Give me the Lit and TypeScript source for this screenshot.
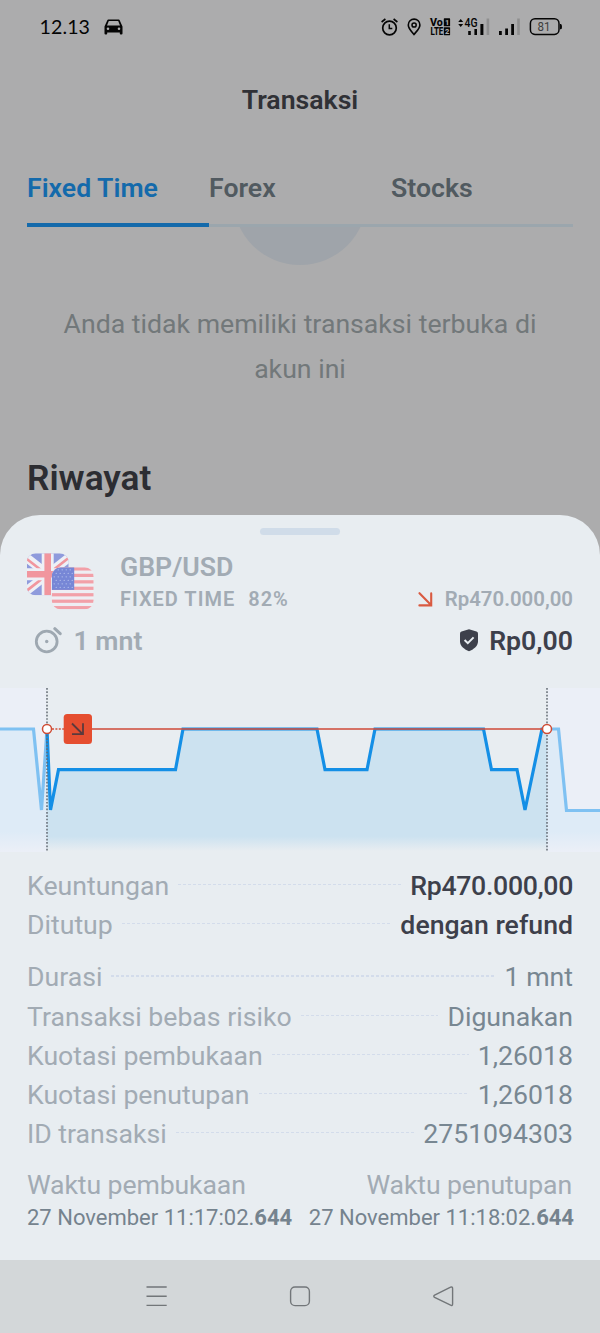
import { LitElement, html, css, svg } from "lit";
import { customElement } from "lit/decorators.js";

const LINE = "M47 729L50.5 810L58.5 769.7H175.5L183 729H317L325 769.7H367L375 729H483.5L491.5 769.7H517L525 810L542 729H547";

@customElement("status-bar")
class StatusBar extends LitElement {
  static styles = css`
    :host { display: flex; height: 54px; color: #050505; padding: 0 38px 0 39.5px; align-items: center; justify-content: space-between; font-family: Lato, sans-serif; }
    .left { display: flex; align-items: center; gap: 14px; }
    .time { font-size: 19.6px; letter-spacing: 0.1px; line-height: 53px; height: 54px; }
    svg { display: block; }
    .label { font-family: Roboto, sans-serif; }
  `;
  render() {
    return html`
      <div class="left">
        <span class="time">12.13</span>
        <svg width="19" height="16" viewBox="0 0 19 16"><path fill="currentColor" fill-rule="evenodd" d="M4.4 0.6H14.6Q15.5 .6 15.8 1.4L18.5 7.6V14.6Q18.5 15.6 17.4 15.6H16.8Q15.8 15.6 15.8 14.6V13.4H3.2V14.6Q3.2 15.6 2.2 15.6H1.6Q.5 15.6 .5 14.6V7.6L3.2 1.4Q3.5.6 4.4.6ZM4.8 2.1L3 6.5H16L14.2 2.1ZM4 8.4A1.3 1.3 0 1 0 4 11A1.3 1.3 0 1 0 4 8.4ZM15 8.4A1.3 1.3 0 1 0 15 11A1.3 1.3 0 1 0 15 8.4Z"/></svg>
      </div>
      <svg width="182" height="24" viewBox="380 15 182 24" fill="none" stroke="#050505">
        <circle cx="389.5" cy="28" r="6.8" stroke-width="1.7"/>
        <path d="M389.3 24.2V28.4H392.3" stroke-width="1.5"/>
        <path d="M381.6 22L385.4 19M397.4 22L393.6 19" stroke-width="1.6"/>
        <path d="M414 34.4C411 30.8 408.3 28.4 408.3 24.9A5.8 5.8 0 0 1 419.9 24.9C419.9 28.4 417 30.8 414 34.4Z" stroke-width="1.6"/>
        <circle cx="414.1" cy="25" r="2.1" stroke-width="1.5"/>
        <g fill="#050505" stroke="none" class="label" font-weight="800">
          <text x="430" y="26.2" font-size="10.8" textLength="12.8" lengthAdjust="spacingAndGlyphs">Vo</text>
          <text x="430.5" y="35.2" font-size="10.8" textLength="12.8" lengthAdjust="spacingAndGlyphs">LTE</text>
          <rect x="443.8" y="18.3" width="6.3" height="8" rx=".6"/><rect x="443.8" y="27.2" width="6.3" height="8" rx=".6"/>
          <g fill="#acacad" font-size="7.5"><text x="445.1" y="25">1</text><text x="444.9" y="33.9">2</text></g>
          <path d="M458.2 22L460.7 19L463.2 22ZM458.2 24L460.7 27L463.2 24Z"/>
          <text x="464.6" y="26.8" font-size="12.2" font-weight="500" textLength="13" lengthAdjust="spacingAndGlyphs">4G</text>
          <rect x="468.2" y="31" width="2.6" height="4"/><rect x="474.4" y="29" width="2.6" height="6"/><rect x="480.4" y="24" width="3" height="11"/>
          <rect x="486.6" y="18.5" width="2.6" height="16.5" fill="#8f8f90"/>
          <rect x="499" y="31" width="2.8" height="4"/><rect x="505.2" y="28.5" width="2.8" height="6.5"/><rect x="511.2" y="24" width="2.8" height="11"/>
          <rect x="517.2" y="18.5" width="2.6" height="16.5" fill="#8f8f90"/>
          <text x="537.4" y="31" font-size="12" font-weight="400" fill="#3c3c3c" textLength="13" lengthAdjust="spacingAndGlyphs">81</text>
          <path d="M560 24H560.8Q562 24 562 26.7T560.8 29.3H560Z"/>
        </g>
        <rect x="530.4" y="18.8" width="28.6" height="15.6" rx="4.6" stroke-width="1.5"/>
      </svg>`;
  }
}

@customElement("trade-chart")
class TradeChart extends LitElement {
  static styles = css`:host { display: block; height: 168px; } svg { display: block; }`;
  render() {
    return html`<svg width="600" height="168" viewBox="0 686 600 168" fill="none">
      <defs>
        <linearGradient id="in" x1="0" y1="729" x2="0" y2="851" gradientUnits="userSpaceOnUse">
          <stop offset="0" stop-color="#cce2f0"/><stop offset=".88" stop-color="#cce2f0"/><stop offset="1" stop-color="#e8edf1"/>
        </linearGradient>
        <linearGradient id="out" x1="0" y1="729" x2="0" y2="851" gradientUnits="userSpaceOnUse">
          <stop offset="0" stop-color="#deebf7"/><stop offset=".84" stop-color="#deebf7"/><stop offset="1" stop-color="#ebeff7"/>
        </linearGradient>
      </defs>
      <path fill="#ebeff7" d="M0 688H46V852H0ZM548 688H600V852H548Z"/>
      <path fill="url(#out)" d="M0 729H33.5L41.5 810L47 729V851H0ZM547 729H558.5L566.5 810.5H600V851H547Z"/>
      <path fill="url(#in)" d="${LINE}V851H47Z"/>
      <g stroke-width="3.2">
        <path stroke="#7fc1f2" d="M0 729H33.5L41.5 810L47 729M547 729H558.5L566.5 810.5H600"/>
        <path stroke="#148fe6" d="${LINE}"/>
      </g>
      <path stroke="#626a73" stroke-width="1.5" stroke-dasharray="1.7 1.65" d="M47 688V851M547 688V851"/>
      <path stroke="#cf4f3f" stroke-opacity=".78" stroke-width="2.1" d="M92 729H547"/>
      <path stroke="#d4503a" stroke-width="1.6" stroke-dasharray="2 1.4" d="M52 729H64"/>
      <g fill="#fff" stroke="#cf4c35" stroke-width="1.5"><circle cx="47" cy="729" r="4.5"/><circle cx="547" cy="729" r="4.5"/></g>
      <rect x="63.7" y="714" width="28.3" height="30" rx="3.5" fill="#e54e30"/>
      <path stroke="#5b3a3d" stroke-width="1.8" d="M72 723.5L82.5 734M83 723.3V734.2H72"/>
    </svg>`;
  }
}

@customElement("app-root")
class AppRoot extends LitElement {
  static styles = css`
    :host { display: flex; flex-direction: column; width: 600px; height: 1333px; overflow: hidden; background: #acacad; font-family: Roboto, sans-serif; font-size: 26.67px; }
    svg { display: block; }
    .page { height: 460.5px; flex: none; }
    .title { height: 92px; line-height: 92px; text-align: center; font-weight: 600; color: #303136; }
    .tabs { display: grid; grid-template-columns: repeat(3, 1fr); margin: 0 27px; height: 81px; box-sizing: border-box; border-bottom: 3.7px solid #9ba6ad; font-weight: 600; color: #515a60; line-height: 84px; }
    .tab { height: 81px; box-sizing: border-box; }
    .tab.on { color: #146aab; border-bottom: 4px solid #146aab; }
    .disc { height: 38px; overflow: hidden; display: flex; justify-content: center; align-items: flex-end; }
    .circle { width: 134px; height: 134px; border-radius: 50%; background: #9fa4aa; flex: none; }
    .empty { padding: 37px 50px 0; text-align: center; line-height: 45px; color: #72787a; }
    .history { margin: 66px 27px 0; line-height: 40px; font-size: 35.3px; font-weight: 600; color: #2c2d32; }
    .sheet { height: 745px; flex: none; background: #e8edf1; border-radius: 40px 40px 0 0; color: #a2abb4; }
    .grip { height: 34.5px; display: flex; justify-content: center; align-items: center; }
    .grip i { width: 80px; height: 7px; border-radius: 4px; background: #d0dce9; }
    .head { display: grid; grid-template-columns: 93px 1fr auto; height: 75px; padding: 0 27px; }
    .flags { padding-top: 4px; }
    .pair { line-height: 37px; font-weight: 600; }
    .kind { line-height: 27px; font-size: 20px; letter-spacing: 1px; font-weight: 600; }
    .kind span { margin-left: 13px; }
    .stake { align-self: start; padding-top: 36px; display: flex; align-items: center; gap: 12px; font-size: 20.4px; font-weight: 600; line-height: 28px; }
    .result { display: flex; justify-content: space-between; height: 34px; padding: 0 27px 0 34px; font-weight: 600; line-height: 34px; }
    .result div { display: flex; align-items: center; gap: 10.5px; }
    .dark { color: #3d404b; }
    .chart { padding-top: 28px; }
    .rows { padding: 12.9px 27px 0; }
    .row { display: flex; align-items: center; height: 39.2px; line-height: 39.2px; }
    .row.gap { margin-top: 13.2px; }
    .dots { flex: 1; height: 1.4px; margin: 0 9px; position: relative; top: -2px; background: repeating-linear-gradient(90deg, #d3dceb 0 3px, transparent 3px 5px); }
    .value { color: #788792; }
    .value.dark { color: #3d404b; font-weight: 500; }
    .value.tight { letter-spacing: -0.3px; }
    .times { display: flex; justify-content: space-between; padding: 10.6px 26px 0 27px; }
    .times div:last-child { text-align: right; }
    .times div:last-child p:first-child { padding-right: 2px; }
    .times p { margin: 0; line-height: 40px; letter-spacing: -0.12px; }
    .times .stamp { font-size: 22px; line-height: 26px; color: #75838e; letter-spacing: 0; }
    .nav { flex: 1; background: #d3d7d9; }
  `;
  row(label: string, value: string, cls = "", v = "") {
    return html`<div class="row ${cls}"><span class="l">${label}</span><i class="dots"></i><span class="value ${v}">${value}</span></div>`;
  }
  render() {
    const stripes = [0, 1, 2, 3, 4, 5, 6].map((i) => svg`<rect x="25" y=${14 + i * 6.46} width="42" height="3.23" fill="#f2a0a8"/>`);
    const stars = [0, 1, 2, 3, 4, 5].flatMap((r) => [0, 1, 2, 3, 4].map((c) => svg`<circle cx=${27.5 + c * 4 + (r % 2) * 2} cy=${16.5 + r * 3.5} r=".65" fill="#b9c5ee"/>`));
    return html`
      <status-bar></status-bar>
      <div class="page">
        <div class="title">Transaksi</div>
        <div class="tabs"><div class="tab on">Fixed Time</div><div class="tab">Forex</div><div class="tab">Stocks</div></div>
        <div class="disc"><div class="circle"></div></div>
        <div class="empty">Anda tidak memiliki transaksi terbuka di akun ini</div>
        <div class="history">Riwayat</div>
      </div>
      <div class="sheet">
        <div class="grip"><i></i></div>
        <div class="head">
          <div class="flags"><svg width="67" height="57" viewBox="0.3 -0.3 67 57">
            <defs><clipPath id="a"><rect width="42" height="42" rx="9"/></clipPath><clipPath id="b"><rect x="25" y="14" width="42" height="42" rx="9"/></clipPath></defs>
            <g clip-path="url(#a)">
              <rect width="42" height="42" fill="#8f9bdc"/>
              <path d="M-2 3L44 39M44 3L-2 39" stroke="#eef0f6" stroke-width="9"/>
              <path d="M-2 4L44 40M44 3L-2 39" stroke="#f1969e" stroke-width="2.6"/>
              <path d="M21 0V42M0 21H42" stroke="#eef0f6" stroke-width="12"/>
              <path d="M21 0V42M0 21H42" stroke="#f1969e" stroke-width="6.6"/>
            </g>
            <g clip-path="url(#b)"><rect x="25" y="14" width="42" height="42" fill="#eeeef3"/>${stripes}<rect x="25" y="14" width="22.5" height="22.6" fill="#7787d6"/>${stars}</g>
          </svg></div>
          <div><div class="pair">GBP/USD</div><div class="kind">FIXED TIME<span>82%</span></div></div>
          <div class="stake">
            <svg width="15" height="15" viewBox="0 0 15 15" fill="none" stroke="#d95a41" stroke-width="2.1" stroke-linecap="round"><path d="M1.5 1.2L13 13M13.2 1.4V13.4H1.4"/></svg>
            <span>Rp470.000,00</span>
          </div>
        </div>
        <div class="result">
          <div><svg width="29" height="28" viewBox="34 627 29 28" fill="none" stroke="#9ea8b1"><circle cx="46.7" cy="641.5" r="10.4" stroke-width="2.8"/><path d="M54.8 628.7L60.2 633.7" stroke-width="3" stroke-linecap="round"/><circle cx="46.7" cy="641.5" r="1.7" fill="#9ea8b1" stroke="none"/></svg><span>1 mnt</span></div>
          <div class="dark"><svg width="20" height="24" viewBox="0 0.8 20 24"><path fill="#3d404b" d="M10 1L17.5 3.2Q19 3.7 19 5.2V13C19 18 14.5 21.2 10 23C5.5 21.2 1 18 1 13V5.2Q1 3.7 2.5 3.2Z"/><path d="M5.6 11.8L8.8 15L14.6 9.2" fill="none" stroke="#e8edf1" stroke-width="2"/></svg><span>Rp0,00</span></div>
        </div>
        <div class="chart"><trade-chart></trade-chart></div>
        <div class="rows">
          ${this.row("Keuntungan", "Rp470.000,00", "", "dark tight")}
          ${this.row("Ditutup", "dengan refund", "", "dark")}
          ${this.row("Durasi", "1 mnt", "gap")}
          ${this.row("Transaksi bebas risiko", "Digunakan")}
          ${this.row("Kuotasi pembukaan", "1,26018")}
          ${this.row("Kuotasi penutupan", "1,26018")}
          ${this.row("ID transaksi", "2751094303")}
        </div>
        <div class="times">
          <div><p>Waktu pembukaan</p><p class="stamp">27 November 11:17:02.<b>644</b></p></div>
          <div><p>Waktu penutupan</p><p class="stamp">27 November 11:18:02.<b>644</b></p></div>
        </div>
      </div>
      <div class="nav"><svg width="600" height="73" viewBox="0 1260 600 73" fill="none" stroke="#727679" stroke-width="1.4">
        <path d="M146.5 1287H166.7M146.5 1296.3H166.7M146.5 1305.4H166.7"/>
        <rect x="290.6" y="1287" width="18.8" height="18.6" rx="4.4"/>
        <path d="M434.6 1295.2L450.6 1287.2Q452.6 1286.5 452.6 1288.4V1304Q452.6 1306 450.6 1305.2L434.6 1297.4Q433 1296.3 434.6 1295.2Z"/>
      </svg></div>`;
  }
}
